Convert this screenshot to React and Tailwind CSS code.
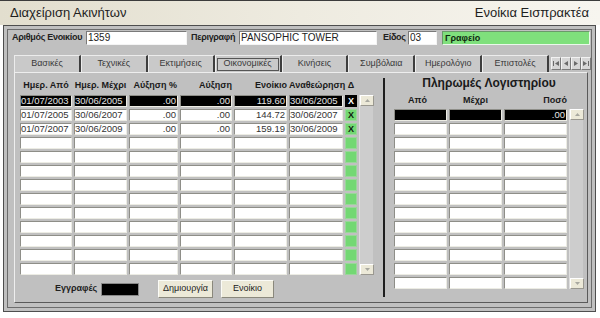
import React from 'react';

const rows = [
  ['01/07/2003', '30/06/2005', '.00', '.00', '119.60', '30/06/2005'],
  ['01/07/2005', '30/06/2007', '.00', '.00', '144.72', '30/06/2007'],
  ['01/07/2007', '30/06/2009', '.00', '.00', '159.19', '30/06/2009'],
];

const tabs = ['Βασικές', 'Τεχνικές', 'Εκτιμήσεις', 'Οικονομικές', 'Κινήσεις', 'Συμβόλαια', 'Ημερολόγιο', 'Επιστολές'];

// left grid column widths / alignment
const leftCols = [
  { w: 'w-[52px]', align: 'text-left' },
  { w: 'w-[53px]', align: 'text-left' },
  { w: 'w-[49px]', align: 'text-right pr-[1px]' },
  { w: 'w-[52px]', align: 'text-right pr-[1px]' },
  { w: 'w-[53px]', align: 'text-right pr-[1px]' },
  { w: 'w-[54px]', align: 'text-left' },
];

const rightCols = ['w-[53px]', 'w-[53px]', 'w-[63px]'];

function Cell({ w, align = '', dark, children }) {
  return (
    <div
      className={`${w} h-[12px] border border-t-[#8e8e88] border-l-[#8e8e88] border-b-[#ecece4] border-r-[#ecece4] text-[9.5px] leading-[10px] whitespace-nowrap overflow-hidden ${align} ${
        dark ? 'bg-black text-[#e6e6e6]' : 'bg-white text-[#333]'
      }`}
    >
      {children}
    </div>
  );
}

function ScrollBtn({ up }) {
  return (
    <div className="h-[11px] w-[14px] bg-[#ece9d8] border border-t-[#fff] border-l-[#fff] border-b-[#9a9890] border-r-[#9a9890] flex items-center justify-center">
      <svg width="5" height="3" viewBox="0 0 5 3">
        <path d={up ? 'M0 3 L2.5 0 L5 3 Z' : 'M0 0 L2.5 3 L5 0 Z'} fill="#a8a8a0" />
      </svg>
    </div>
  );
}

function ScrollBar({ h }) {
  return (
    <div className={`w-[14px] ${h} bg-[#cdcdcd] border-l border-[#dedede] flex flex-col justify-between`}>
      <ScrollBtn up />
      <ScrollBtn />
    </div>
  );
}

function Input({ w, children, className = '' }) {
  return (
    <div
      className={`${w} h-[14px] border border-t-[#7a7a7a] border-l-[#7a7a7a] border-b-[#f4f4f4] border-r-[#f4f4f4] bg-white text-[10px] leading-[12px] pl-[1px] text-[#222] whitespace-nowrap ${className}`}
    >
      {children}
    </div>
  );
}

function NavBtn({ d }) {
  return (
    <div className="w-[10px] h-[13px] bg-[#d6d6d6] border border-t-[#f2f2f2] border-l-[#f2f2f2] border-b-[#7c7c7c] border-r-[#7c7c7c] flex items-center justify-center">
      <svg width="6" height="5" viewBox="0 0 6 5">
        <path d={d} fill="#6a6a6a" />
      </svg>
    </div>
  );
}

export default function App() {
  const emptyLeft = Array.from({ length: 10 });
  const emptyRight = Array.from({ length: 12 });

  return (
    <div className="w-[600px] h-[318px] bg-white font-['Liberation_Sans',Arial,sans-serif] overflow-hidden">
      {/* Title bar */}
      <div className="h-[25px] border-t border-[#3c3c3c] bg-gradient-to-r from-[#e2dece] via-[#eeebe0] to-[#f7f5ef] flex items-center justify-between pl-[10px] pr-[11px] text-[13px] text-[#1e1e1e]">
        <span>Διαχείριση Ακινήτων</span>
        <span className="font-medium">Ενοίκια Εισπρακτέα</span>
      </div>

      {/* Outer frame */}
      <div className="ml-[3px] w-[593px] h-[287px] border border-[#4e4e4e] bg-[#c0c0c0] p-[3px]">
        <div className="h-full border border-[#6c6c6c] pt-[1px]">
          {/* Header fields */}
          <div className="flex items-center h-[14px] pl-[4px]">
            <span className="text-[9px] font-bold tracking-[-0.3px] text-[#222] w-[74px]">Αριθμός Ενοικίου</span>
            <Input w="w-[101px]">1359</Input>
            <span className="ml-[4px] text-[9px] font-bold tracking-[-0.3px] text-[#222] w-[48px]">Περιγραφή</span>
            <Input w="w-[138px]">PANSOPHIC TOWER</Input>
            <span className="ml-[6px] text-[9px] font-bold tracking-[-0.3px] text-[#222] w-[25px]">Είδος</span>
            <Input w="w-[29px]">03</Input>
            <div className="ml-[5px] w-[148px] h-[14px] bg-[#7fe07c] border border-t-[#6a9a6a] border-l-[#6a9a6a] border-b-[#eaf8ea] border-r-[#eaf8ea] text-[9px] font-bold leading-[12px] pl-[2px] text-[#0f2a0f]">
              Γραφείο
            </div>
          </div>

          {/* Tabs */}
          <div className="flex mt-[10px] ml-[6px] h-[17px]">
            {tabs.map((t, i) => (
              <div
                key={t}
                className="w-[67px] h-[17px] bg-[#c9c9c9] border-t border-l border-t-[#ececec] border-l-[#ececec] border-r-2 border-r-[#3e3e3e] flex items-center justify-center text-[9px] text-[#3a3a3a]"
              >
                {i === 3 ? (
                  <span className="w-[62px] h-[13px] border border-[#555] flex items-center justify-center">{t}</span>
                ) : (
                  t
                )}
              </div>
            ))}
            <div className="flex ml-[2px] mt-[2px]">
              <NavBtn d="M0 0 H1 V5 H0 Z M6 0 L2 2.5 L6 5 Z" />
              <NavBtn d="M5 0 L1 2.5 L5 5 Z" />
              <NavBtn d="M1 0 L5 2.5 L1 5 Z" />
              <NavBtn d="M0 0 L4 2.5 L0 5 Z M5 0 H6 V5 H5 Z" />
            </div>
          </div>

          {/* Tab panel */}
          <div className="ml-[6px] w-[574px] h-[231px] border border-t-[#eeeeee] border-l-[#eeeeee] border-b-[#5a5a5a] border-r-[#5a5a5a] bg-[#c0c0c0] flex">
            {/* Left: rent schedule */}
            <div className="ml-[5px] w-[353px] pt-[6px]">
              <div className="flex gap-[2px] h-[13px] items-center text-[9px] font-bold text-[#1a1a1a] whitespace-nowrap">
                <div className="w-[52px] text-center">Ημερ. Από</div>
                <div className="w-[53px] text-center">Ημερ. Μέχρι</div>
                <div className="w-[49px] text-right pr-[1px]">Αύξηση %</div>
                <div className="w-[52px] text-right">Αύξηση</div>
                <div className="w-[53px] text-right">Ενοίκιο</div>
                <div className="w-[54px] text-left">Αναθεώρηση</div>
                <div className="w-[12px] text-center">Δ</div>
              </div>
              <div className="flex gap-[2px] mt-[3px]">
                <div className="flex flex-col gap-[2px]">
                  {rows.map((r, ri) => (
                    <div key={ri} className="flex gap-[2px]">
                      {r.map((v, ci) => (
                        <Cell key={ci} w={leftCols[ci].w} align={leftCols[ci].align} dark={ri === 0}>
                          {v}
                        </Cell>
                      ))}
                      <div
                        className={`w-[12px] h-[12px] flex items-center justify-center text-[9px] font-bold leading-none ${
                          ri === 0 ? 'bg-black text-white' : 'bg-[#73d873] text-[#102010] border border-[#9ad69a]'
                        }`}
                      >
                        X
                      </div>
                    </div>
                  ))}
                  {emptyLeft.map((_, ri) => (
                    <div key={ri} className="flex gap-[2px]">
                      {leftCols.map((c, ci) => (
                        <Cell key={ci} w={c.w} />
                      ))}
                      <div className="w-[12px] h-[12px] bg-[#73d873] border border-[#9ad69a]" />
                    </div>
                  ))}
                </div>
                <ScrollBar h="h-[180px]" />
              </div>

              {/* Bottom controls */}
              <div className="flex items-center mt-[5px] h-[18px]">
                <span className="ml-[35px] w-[46px] text-[9px] font-bold text-[#222]">Εγγραφές</span>
                <div className="w-[38px] h-[13px] bg-black border border-[#888]" />
                <button className="ml-[19px] w-[55px] h-[18px] bg-[#ece9d8] border border-t-[#fbfbf6] border-l-[#fbfbf6] border-b-[#8a887c] border-r-[#8a887c] text-[9px] text-[#222]">
                  Δημιουργία
                </button>
                <button className="ml-[8px] w-[53px] h-[18px] bg-[#ece9d8] border border-t-[#fbfbf6] border-l-[#fbfbf6] border-b-[#8a887c] border-r-[#8a887c] text-[9px] text-[#222]">
                  Ενοίκιο
                </button>
              </div>
            </div>

            {/* Divider */}
            <div className="ml-[10px] mt-[5px] w-[2px] h-[219px] bg-[#1e1e1e]" />

            {/* Right: accounting payments */}
            <div className="ml-[9px] w-[190px] pt-[3px]">
              <div className="h-[14px] text-center text-[12px] font-bold text-[#1a1a1a] leading-[14px]">Πληρωμές Λογιστηρίου</div>
              <div className="flex gap-[2px] h-[12px] mt-[5px] items-center text-[9px] font-bold text-[#1a1a1a]">
                <div className="w-[53px] text-center pr-[6px]">Από</div>
                <div className="w-[53px] text-center">Μέχρι</div>
                <div className="w-[63px] text-right">Ποσό</div>
              </div>
              <div className="flex gap-[2px] mt-[2px]">
                <div className="flex flex-col gap-[2px]">
                  <div className="flex gap-[2px]">
                    <Cell w={rightCols[0]} dark />
                    <Cell w={rightCols[1]} dark />
                    <Cell w={rightCols[2]} align="text-right pr-[1px]" dark>
                      .00
                    </Cell>
                  </div>
                  {emptyRight.map((_, ri) => (
                    <div key={ri} className="flex gap-[2px]">
                      {rightCols.map((w, ci) => (
                        <Cell key={ci} w={w} />
                      ))}
                    </div>
                  ))}
                </div>
                <ScrollBar h="h-[180px]" />
              </div>
            </div>
          </div>
        </div>
      </div>
    </div>
  );
}
